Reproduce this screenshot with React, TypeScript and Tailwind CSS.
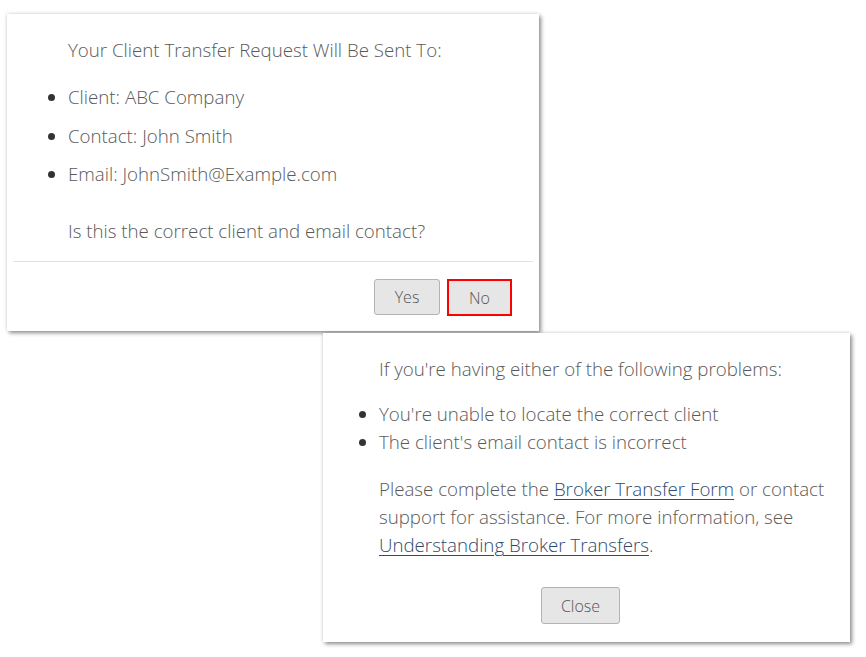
import React from 'react'

const FONT = { fontFamily: '"Open Sans", "Liberation Sans", sans-serif' }

const CARD_CLASS =
  'bg-white shadow-[2px_2px_4px_rgba(0,0,0,0.45),_-1px_-1px_3px_rgba(0,0,0,0.08)]'

const BTN_CLASS =
  'rounded-[3px] border border-[#b3b3b3] bg-[#e6e6e6] text-[16px] font-light text-[#555]'

const LINK_CLASS = 'text-[#2d4a70] underline underline-offset-[3px] decoration-1'

const ConfirmDialog: React.FC = () => (
  <div className={`${CARD_CLASS} ml-[7px] mt-[14px] w-[532px] pt-[22px] pb-[15px]`}>
    <p className="pl-[61px] leading-[28px]">Your Client Transfer Request Will Be Sent To:</p>
    <ul className="mt-[19px] list-disc space-y-[10.5px] pl-[61px] marker:text-[#333]">
      <li className="leading-[28px]">Client: ABC Company</li>
      <li className="leading-[28px]">Contact: John Smith</li>
      <li className="leading-[28px]">Email: JohnSmith@Example.com</li>
    </ul>
    <p className="mt-[29px] pl-[61px] leading-[28px]">Is this the correct client and email contact?</p>
    <div className="mx-[6px] mt-4 border-t border-[#e2e2e2]" />
    <div className="mt-[17px] flex justify-end gap-[7px] pr-[27px]">
      <button type="button" className={`${BTN_CLASS} h-9 w-[66px]`}>
        Yes
      </button>
      <button
        type="button"
        className="h-[37px] w-[65px] border-2 border-[#ff0000] bg-[#e6e6e6] text-[16px] font-light text-[#555]"
      >
        No
      </button>
    </div>
  </div>
)

const HelpDialog: React.FC = () => (
  <div className={`${CARD_CLASS} ml-[323px] mt-[2px] w-[527px] pt-[22px] pb-[18px]`}>
    <p className="pl-[56px] leading-[28px]">If you're having either of the following problems:</p>
    <ul className="mt-[17px] list-disc pl-[56px] marker:text-[#333]">
      <li className="leading-[28px]">You're unable to locate the correct client</li>
      <li className="leading-[28px]">The client's email contact is incorrect</li>
    </ul>
    <p className="mt-[19px] pl-[56px] pr-[14px] leading-[28px]">
      Please complete the{' '}
      <a href="#" className={LINK_CLASS}>
        Broker Transfer Form
      </a>{' '}
      or contact support for assistance. For more information, see{' '}
      <a href="#" className={LINK_CLASS}>
        Understanding Broker Transfers
      </a>
      .
    </p>
    <div className="mt-[28px] flex justify-center pr-3">
      <button type="button" className={`${BTN_CLASS} h-[37px] w-[79px]`}>
        Close
      </button>
    </div>
  </div>
)

export default function App() {
  return (
    <div className="min-h-screen bg-white text-[18.7px] font-light text-[#595959]" style={FONT}>
      <div className="pb-4">
        <ConfirmDialog />
        <HelpDialog />
      </div>
    </div>
  )
}
